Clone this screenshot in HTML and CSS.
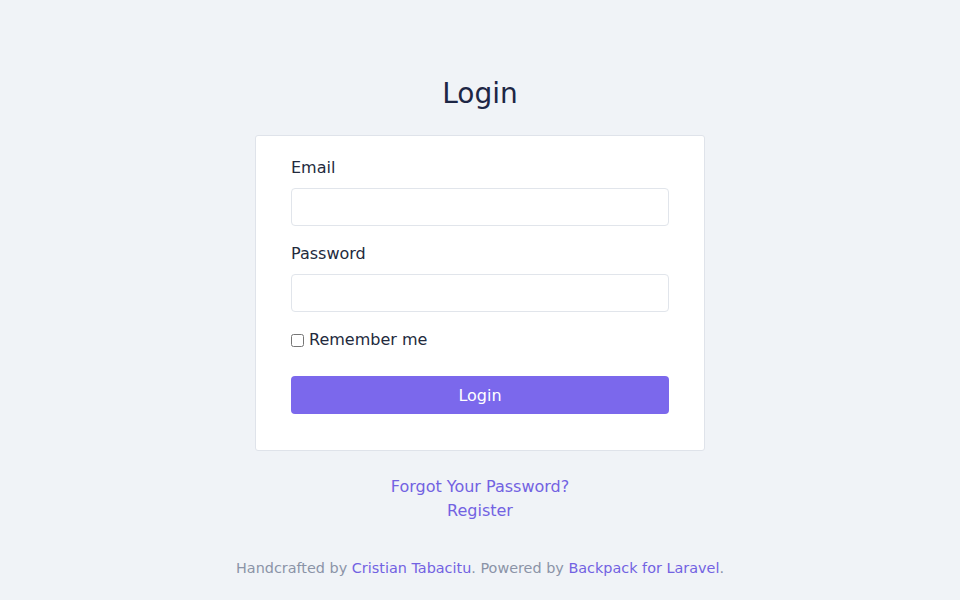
FILE: index.html
```html
<!DOCTYPE html>
<html lang="en">
<head>
    <meta charset="UTF-8">
    <meta name="viewport" content="width=device-width, initial-scale=1.0">
    <title>Login</title>
    <link rel="stylesheet" href="styles.css">
</head>
<body>
    <div class="page">
        <h1 class="page-title">Login</h1>
        <div class="card">
            <form id="loginForm">
                <div class="form-group">
                    <label for="email">Email</label>
                    <input type="text" id="email" name="email">
                </div>
                <div class="form-group">
                    <label for="password">Password</label>
                    <input type="password" id="password" name="password">
                </div>
                <div class="form-check">
                    <input type="checkbox" id="remember" name="remember">
                    <label for="remember">Remember me</label>
                </div>
                <button type="submit" class="btn-login">Login</button>
            </form>
        </div>
        <div class="links">
            <a href="#" class="link">Forgot Your Password?</a>
            <a href="#" class="link">Register</a>
        </div>
        <div class="footer">
            Handcrafted by <a href="#">Cristian Tabacitu</a>. Powered by <a href="#">Backpack for Laravel</a>.
        </div>
    </div>
</body>
</html>
```

FILE: styles.css
```css
body {
    font-family: "DejaVu Sans", sans-serif;
    margin: 0;
    padding: 0;
    background-color: #f0f3f7;
    color: #232a3d;
}
.page {
    display: flex;
    flex-direction: column;
    align-items: center;
    padding-top: 77px;
}
.page-title {
    margin: 0 0 24px;
    font-size: 28px;
    line-height: 34px;
    font-weight: normal;
    color: #1d2645;
}
.card {
    width: 378px;
    padding: 21px 35px 36px;
    background-color: #fff;
    border: 1px solid #dfe3ea;
    border-radius: 3px;
}
.form-group {
    margin-bottom: 17px;
}
.form-group label {
    display: block;
    font-size: 16px;
    line-height: 22px;
    margin-bottom: 9px;
}
.form-group input {
    display: block;
    width: 100%;
    height: 38px;
    box-sizing: border-box;
    border: 1px solid #e1e5eb;
    border-radius: 4px;
    padding: 6px 12px;
    font-family: inherit;
    font-size: 16px;
}
.form-check {
    display: flex;
    align-items: center;
    font-size: 16px;
    line-height: 20px;
    padding-top: 1px;
    margin-bottom: 26px;
}
.form-check input {
    width: 13px;
    height: 13px;
    margin: 0 5px 0 0;
}
.btn-login {
    display: block;
    width: 100%;
    height: 38px;
    background-color: #7b68ec;
    color: #fff;
    border: none;
    border-radius: 4px;
    font-family: inherit;
    font-size: 16px;
    cursor: pointer;
}
.btn-login:hover {
    background-color: #6a56e6;
}
.links {
    display: flex;
    flex-direction: column;
    align-items: center;
    margin-top: 24px;
}
.link {
    color: #7262e2;
    text-decoration: none;
    font-size: 16px;
    line-height: 24px;
}
.link:hover {
    text-decoration: underline;
}
.footer {
    margin-top: 35px;
    font-size: 14.4px;
    line-height: 20px;
    color: #8b93a7;
}
.footer a {
    color: #7262e2;
    text-decoration: none;
}
```
